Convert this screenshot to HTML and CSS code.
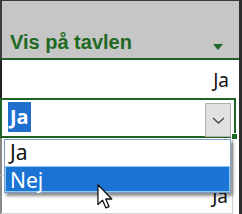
FILE: index.html
```html
<!DOCTYPE html>
<html lang="da">
<head>
    <meta charset="UTF-8">
    <meta name="viewport" content="width=device-width, initial-scale=1.0">
    <title>Vis på tavlen</title>
    <link rel="stylesheet" href="styles.css">
</head>
<body>

    <div class="sheet">
        <!-- Column header with filter arrow -->
        <div class="head">
            <span class="title">Vis på tavlen</span>
            <span class="filter"></span>
        </div>

        <div class="row">
            <div class="cell first">Ja</div>
        </div>

        <!-- Active cell being edited -->
        <div class="row active-row">
            <div class="cell active">
                <span class="sel">Ja</span>
                <span class="drop-btn">
                    <svg width="13" height="7" viewBox="0 0 13 7">
                        <path d="M1 1 L6.5 6 L12 1" fill="none" stroke="#4a4a4a" stroke-width="1.3"/>
                    </svg>
                </span>
                <span class="handle"></span>
            </div>
        </div>

        <div class="row">
            <div class="cell">Ja</div>
        </div>
        <div class="row">
            <div class="cell">Ja</div>
        </div>

        <!-- Dropdown list -->
        <ul class="list">
            <li>Ja</li>
            <li class="on">Nej</li>
        </ul>

        <svg class="cursor" width="17" height="25" viewBox="0 0 13 19.5">
            <path d="M0.6 0.6 L0.6 16 L4.2 12.6 L6.8 18.6 L9.2 17.6 L6.7 11.7 L11.4 11.7 Z" fill="#fff" stroke="#111" stroke-width="1" stroke-linejoin="round"/>
        </svg>
    </div>

</body>
</html>
```

FILE: styles.css
```css
body {
    margin: 0;
    background-color: #fff;
    font-family: "Noto Sans", "Liberation Sans", sans-serif;
}

.sheet {
    position: relative;
    width: 242px;
    height: 214px;
    box-sizing: border-box;
    border-top: 1px solid #3a3a3a;
    border-right: 3px solid #2e2e2e;
    overflow: hidden;
}

.head {
    display: flex;
    align-items: flex-start;
    height: 59px;
    box-sizing: border-box;
    padding: 30px 0 0 8px;
    background-color: #c6c6c6; /* grey header */
    border-left: 2px solid #3c3c3c;
    border-bottom: 2px solid #23602a;
}

.title {
    font-family: "Liberation Sans", Arial, sans-serif;
    font-weight: bold;
    font-size: 20px;
    line-height: 23px;
    color: #1e6a24;
}

.filter {
    margin: 13px 16px 0 auto;
    width: 0;
    height: 0;
    border-left: 5px solid transparent;
    border-right: 5px solid transparent;
    border-top: 6px solid #23672a;
}

.row {
    display: flex;
    height: 38px;
}

.cell {
    width: 233px;
    box-sizing: border-box;
    padding: 2px 4px 0 0;
    text-align: right;
    font-size: 19px;
    line-height: 36px;
    color: #111;
    border-left: 2px solid #8a8a8a;
    border-right: 1px solid #d0d0d0;
    border-bottom: 1px solid #d8d8d8;
}

.cell.first {
    border-left-color: #222;
    border-right: none;
    border-bottom: none;
}

.active-row {
    height: 40px;
}

.cell.active {
    position: relative;
    display: flex;
    align-items: flex-start;
    width: 236px;
    padding: 0;
    border: 2px solid #1f6326; /* green active border */
}

.sel {
    margin: 2px 0 0 6px;
    padding: 0 2px;
    height: 30px;
    font-size: 20px;
    font-weight: bold;
    line-height: 30px;
    color: #fff;
    background-color: #1f6fcf;
}

.drop-btn {
    display: flex;
    align-items: center;
    justify-content: center;
    margin: 3px 3px 0 auto;
    width: 26px;
    height: 34px;
    box-sizing: border-box;
    background-color: #e1e1e1;
    border: 1px solid #b0b0b0;
}

.handle {
    position: absolute;
    right: -4px;
    bottom: -4px;
    width: 5px;
    height: 5px;
    background-color: #1f6326;
    border: 1px solid #fff;
}

.list {
    position: absolute;
    left: 4px;
    top: 138px;
    width: 227px;
    margin: 0;
    padding: 0;
    list-style: none;
    box-sizing: border-box;
    background-color: #fff;
    border: 1px solid #7b9dc6;
    box-shadow: 2px 3px 3px rgba(0, 0, 0, 0.45);
}

.list li {
    height: 26px;
    padding-left: 5px;
    font-size: 21px;
    line-height: 25px;
    color: #111;
}

.list li.on {
    height: 26px;
    box-sizing: border-box;
    padding-top: 1px;
    line-height: 24px;
    color: #fff;
    background-color: #1b74d4;
    border: 1px solid #8ccaf0; /* focus outline */
    padding-left: 4px;
}

.cursor {
    position: absolute;
    left: 97px;
    top: 183px;
}
```
